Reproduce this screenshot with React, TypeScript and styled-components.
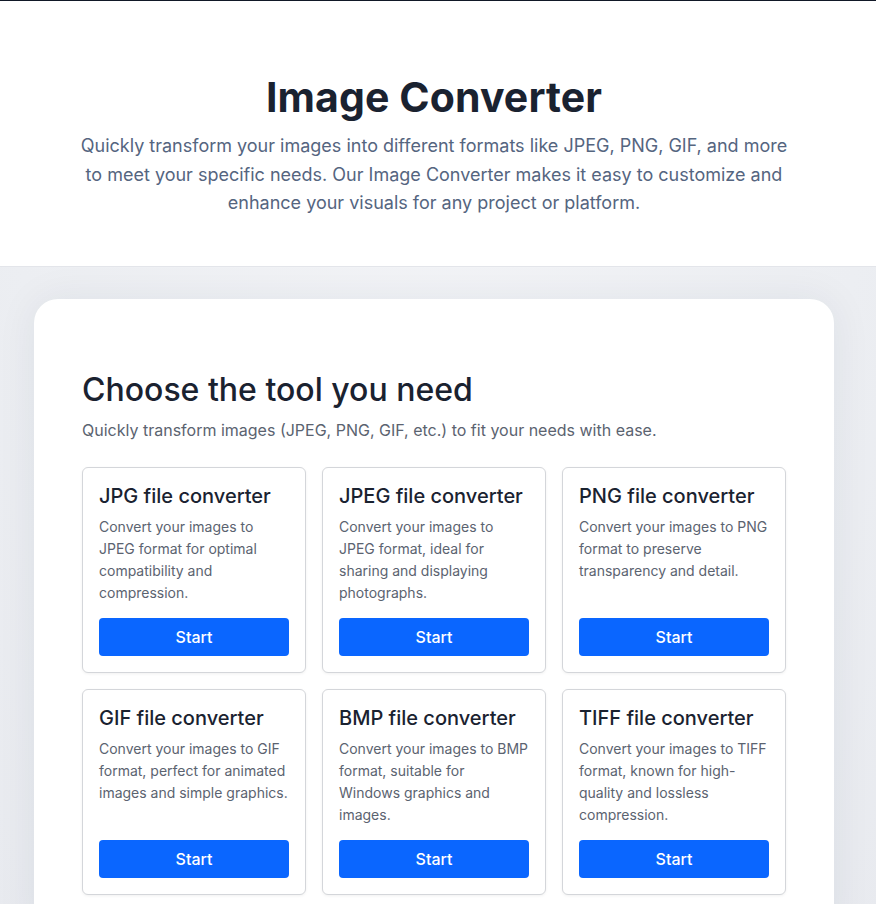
import React from "react";
import styled, { createGlobalStyle } from "styled-components";

const Global = createGlobalStyle`
  * { box-sizing: border-box; }
  html, body { margin: 0; padding: 0; background: #eef0f4; }
  body { font-family: Inter, "Noto Sans", sans-serif; -webkit-font-smoothing: antialiased; }
`;

const Page = styled.div`
  min-height: 904px;
  border-top: 1px solid #111827;
  background: radial-gradient(ellipse at 50% 0%, #f4f5f8 0%, #eceef2 70%, #e8eaef 100%);
`;

const Hero = styled.header`
  background: #ffffff;
  border-bottom: 1px solid #e3e5ea;
  padding: 72px 32px 48px 24px;
  text-align: center;
`;

const HeroTitle = styled.h1`
  margin: 0;
  font-size: 41px;
  line-height: 48px;
  font-weight: 700;
  color: #1a2230;
  letter-spacing: 0.1px;
`;

const HeroText = styled.p`
  margin: 11px auto 0;
  max-width: 720px;
  font-size: 18px;
  line-height: 28.5px;
  color: #55657f;
`;

const Main = styled.main`
  padding: 32px 34px 0;
`;

const Panel = styled.section`
  max-width: 800px;
  background: #ffffff;
  border-radius: 24px;
  padding: 72px 48px 48px;
  box-shadow: 0 0 40px rgba(30, 40, 70, 0.07);
`;

const PanelTitle = styled.h2`
  margin: 0;
  font-size: 32px;
  line-height: 38px;
  font-weight: 500;
  color: #1a2230;
`;

const PanelText = styled.p`
  margin: 10px 0 0;
  font-size: 16px;
  line-height: 22px;
  color: #5b6370;
`;

const Grid = styled.div`
  margin-top: 26px;
  display: grid;
  grid-template-columns: repeat(3, 1fr);
  gap: 16px;
`;

const ToolCard = styled.article`
  display: flex;
  flex-direction: column;
  border: 1px solid #d4d6da;
  border-radius: 6px;
  padding: 16px;
  background: #ffffff;
  box-shadow: 0 1px 3px rgba(0, 0, 0, 0.06);
  min-height: 206px;
`;

const ToolTitle = styled.h3`
  margin: 0;
  font-size: 20px;
  line-height: 24px;
  font-weight: 500;
  color: #1a2230;
`;

const ToolText = styled.p`
  margin: 8px 0 14px;
  font-size: 14px;
  line-height: 22px;
  color: #5b6370;
`;

const StartButton = styled.button`
  margin-top: auto;
  height: 38px;
  width: 100%;
  border: none;
  border-radius: 4px;
  background: #0a66ff;
  color: #ffffff;
  font-family: inherit;
  font-size: 16px;
  font-weight: 500;
  cursor: pointer;
`;

const tools = [
  { title: "JPG file converter", text: "Convert your images to JPEG format for optimal compatibility and compression." },
  { title: "JPEG file converter", text: "Convert your images to JPEG format, ideal for sharing and displaying photographs." },
  { title: "PNG file converter", text: "Convert your images to PNG format to preserve transparency and detail." },
  { title: "GIF file converter", text: "Convert your images to GIF format, perfect for animated images and simple graphics." },
  { title: "BMP file converter", text: "Convert your images to BMP format, suitable for Windows graphics and images." },
  { title: "TIFF file converter", text: "Convert your images to TIFF format, known for high-quality and lossless compression." },
];

export default function App() {
  return (
    <Page>
      <Global />
      <Hero>
        <HeroTitle>Image Converter</HeroTitle>
        <HeroText>
          Quickly transform your images into different formats like JPEG, PNG, GIF, and more to meet your specific needs. Our Image Converter makes it easy to customize and enhance your visuals for any project or platform.
        </HeroText>
      </Hero>
      <Main>
        <Panel>
          <PanelTitle>Choose the tool you need</PanelTitle>
          <PanelText>Quickly transform images (JPEG, PNG, GIF, etc.) to fit your needs with ease.</PanelText>
          <Grid>
            {tools.map((t) => (
              <ToolCard key={t.title}>
                <ToolTitle>{t.title}</ToolTitle>
                <ToolText>{t.text}</ToolText>
                <StartButton>Start</StartButton>
              </ToolCard>
            ))}
          </Grid>
        </Panel>
      </Main>
    </Page>
  );
}
